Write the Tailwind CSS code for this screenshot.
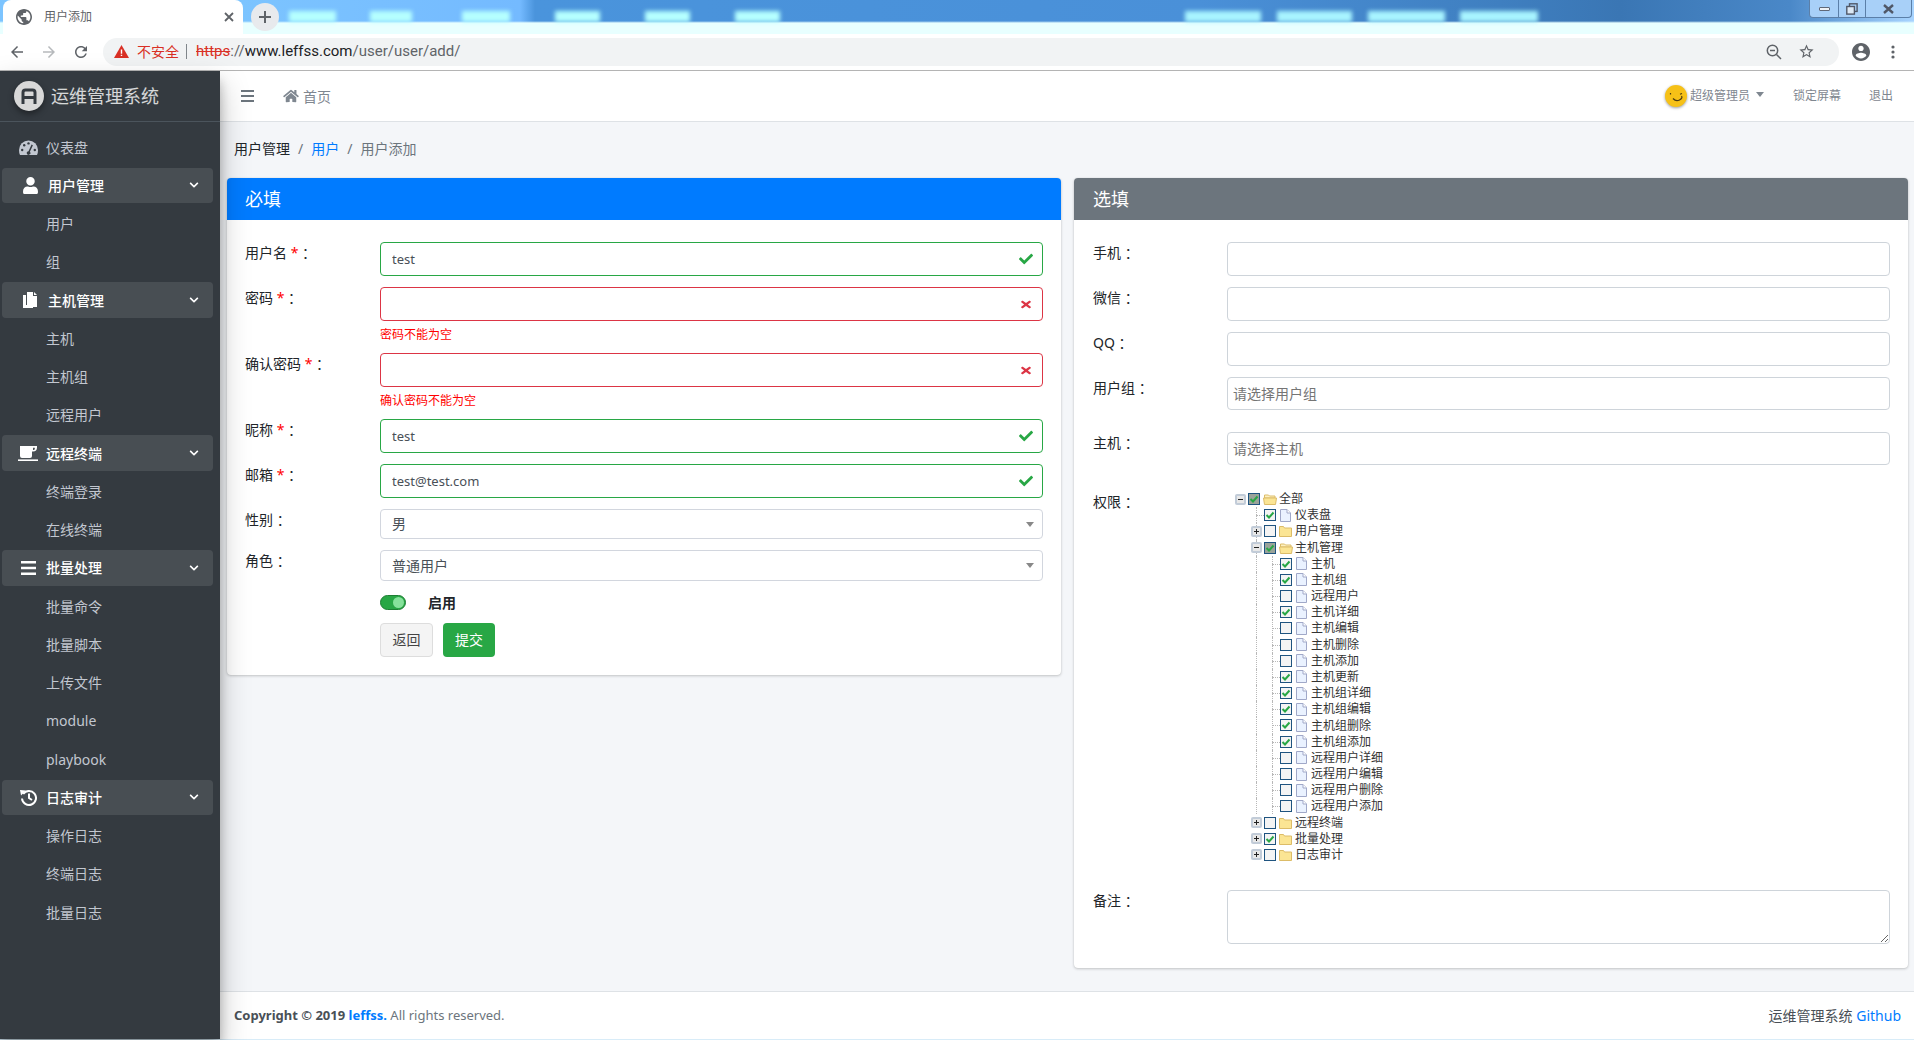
<!DOCTYPE html>
<html lang="zh-CN">
<head>
  <meta charset="UTF-8" />
  <title>用户添加</title>
  <script src="https://cdn.jsdelivr.net/npm/@tailwindcss/browser@4"></script>
</head>
<body class="w-[1914px] h-[1040px] overflow-hidden bg-[#d8ecf8] text-[14px] text-[#212529] font-['Noto_Sans','Noto_Sans_CJK_SC',sans-serif]">

  <!-- browser tab strip -->
  <div class="relative h-[34px] flex items-start bg-[linear-gradient(to_bottom,transparent_21px,#e8ffff_23px),linear-gradient(to_right,#7cc4ff_240px,#74baff_520px,#4a94dc_535px,#4a90d8_1200px,#3f7fc0_1500px,#3a76b4_1620px,#4a88c8_1790px,#a8d4ff_1914px)]">
    <div class="w-[240px] ml-[3px] h-[34px] bg-white rounded-t-lg flex items-center pl-[13px] pr-[9px] shrink-0">
      <svg class="w-[16px] h-[16px] mr-[12px]" viewBox="2 2 20 20" fill="#5f6368"><path d="M12 2C6.48 2 2 6.48 2 12s4.48 10 10 10 10-4.48 10-10S17.52 2 12 2zm-1 17.93c-3.95-.49-7-3.85-7-7.93 0-.62.08-1.21.21-1.79L9 15v1c0 1.1.9 2 2 2v1.93zm6.9-2.54c-.26-.81-1-1.39-1.9-1.39h-1v-3c0-.55-.45-1-1-1H8v-2h2c.55 0 1-.45 1-1V7h2c1.1 0 2-.9 2-2v-.41c2.93 1.19 5 4.06 5 7.41 0 2.08-.8 3.97-2.1 5.39z"/></svg>
      <span class="text-[12px] text-[#5f6368] flex-1">用户添加</span>
      <svg class="w-[10px] h-[10px]" viewBox="0 0 10 10" stroke="#5f6368" stroke-width="1.8"><path d="M1 1l8 8M9 1l-8 8"/></svg>
    </div>
    <div class="w-[28px] h-[28px] mt-[3px] ml-[8px] rounded-full bg-[#e8eaed] flex items-center justify-center shrink-0">
      <svg class="w-[12px] h-[12px]" viewBox="0 0 12 12" stroke="#5f6368" stroke-width="2"><path d="M6 0v12M0 6h12"/></svg>
    </div>
    <div class="h-[11px] w-[47px] mt-[11px] ml-[10px] bg-[#b5ffff] blur-[2px]"></div>
    <div class="h-[11px] w-[42px] mt-[11px] ml-[34px] bg-[#b5ffff] blur-[2px]"></div>
    <div class="h-[11px] w-[48px] mt-[11px] ml-[50px] bg-[#b5ffff] blur-[2px]"></div>
    <div class="h-[11px] w-[45px] mt-[11px] ml-[45px] bg-[#b5ffff] blur-[2px]"></div>
    <div class="h-[11px] w-[45px] mt-[11px] ml-[45px] bg-[#b5ffff] blur-[2px]"></div>
    <div class="h-[11px] w-[45px] mt-[11px] ml-[45px] bg-[#b5ffff] blur-[2px]"></div>
    <div class="h-[11px] w-[76px] mt-[11px] ml-[405px] bg-[#a8f4ff] blur-[2px]"></div>
    <div class="h-[11px] w-[75px] mt-[11px] ml-[16px] bg-[#a8f4ff] blur-[2px]"></div>
    <div class="h-[11px] w-[77px] mt-[11px] ml-[16px] bg-[#a8f4ff] blur-[2px]"></div>
    <div class="h-[11px] w-[78px] mt-[11px] ml-[15px] bg-[#a8f4ff] blur-[2px]"></div>
    <!-- window controls -->
    <div class="absolute top-0 right-[2px] w-[103px] h-[18px] flex bg-[#a8d0f8] border border-t-0 border-[#5b7fa8] rounded-b-[4px]">
      <div class="w-[29px] flex items-center justify-center border-r border-[#5b7fa8]"><span class="w-[11px] h-[4px] bg-[#eef2f6] border border-[#606878] rounded-[1px]"></span></div>
      <div class="w-[27px] flex items-center justify-center border-r border-[#5b7fa8]">
        <svg class="w-[12px] h-[12px]" viewBox="0 0 12 12" fill="none" stroke="#505868" stroke-width="1.4"><rect x="3.5" y=".8" width="7.6" height="7.6"/><rect x=".8" y="3.5" width="7.6" height="7.6" fill="#dce8f4"/></svg>
      </div>
      <div class="flex-1 flex items-center justify-center">
        <svg class="w-[11px] h-[10px]" viewBox="0 0 11 10" stroke="#505868" stroke-width="2.4"><path d="M1 1l9 8M10 1l-9 8"/></svg>
      </div>
    </div>
  </div>

  <!-- browser toolbar -->
  <div class="h-[37px] bg-white border-b border-[#b4b4b4] flex items-center pb-[1px]">
    <div class="w-[103px] flex items-center pl-[8px] gap-[14px] shrink-0">
      <svg class="w-[18px] h-[18px]" viewBox="0 0 24 24" fill="#5f6368"><path d="M20 11H7.83l5.59-5.59L12 4l-8 8 8 8 1.41-1.41L7.83 13H20v-2z"/></svg>
      <svg class="w-[18px] h-[18px]" viewBox="0 0 24 24" fill="#b6b9bc"><path d="M12 4l-1.41 1.41L16.17 11H4v2h12.17l-5.58 5.59L12 20l8-8z"/></svg>
      <svg class="w-[18px] h-[18px]" viewBox="0 0 24 24" fill="#5f6368"><path d="M17.65 6.35C16.2 4.9 14.21 4 12 4c-4.42 0-7.99 3.58-7.99 8s3.57 8 7.99 8c3.73 0 6.84-2.55 7.73-6h-2.08c-.82 2.33-3.04 4-5.65 4-3.31 0-6-2.69-6-6s2.69-6 6-6c1.66 0 3.14.69 4.22 1.78L13 11h7V4l-2.35 2.35z"/></svg>
    </div>
    <div class="w-[1736px] h-[28px] rounded-full bg-[#f1f3f4] flex items-center pl-[11px] pr-[24px]">
      <svg class="w-[15px] h-[13px] mr-[8px]" viewBox="0 0 15 13"><path d="M7.5 0L15 13H0z" fill="#d93025"/><path d="M6.8 4.5h1.4v4.2H6.8zM6.8 9.7h1.4v1.4H6.8z" fill="#fff"/></svg>
      <span class="text-[14px] text-[#d93025]">不安全</span>
      <span class="w-px h-[15px] bg-[#80868b] ml-[7px] mr-[9px]"></span>
      <span class="text-[15px] font-['Roboto','Noto_Sans',sans-serif] flex-1"><span class="text-[#d93025] line-through">https</span><span class="text-[#5f6368]">://</span><span class="text-[#202124]">www.leffss.com</span><span class="text-[#5f6368]">/user/user/add/</span></span>
      <svg class="w-[16px] h-[16px] mr-[16px]" viewBox="0 0 16 16" fill="none" stroke="#5f6368" stroke-width="1.5"><circle cx="6.5" cy="6.5" r="5.2"/><path d="M10.5 10.5L15 15M4 6.5h5"/></svg>
      <svg class="w-[17px] h-[17px]" viewBox="0 0 24 24" fill="#5f6368"><path d="M22 9.24l-7.19-.62L12 2 9.19 8.63 2 9.24l5.46 4.73L5.82 21 12 17.27 18.18 21l-1.63-7.03L22 9.24zM12 15.4l-3.76 2.27 1-4.28-3.32-2.88 4.38-.38L12 6.1l1.71 4.04 4.38.38-3.32 2.88 1 4.28L12 15.4z"/></svg>
    </div>
    <svg class="w-[18px] h-[18px] ml-[13px]" viewBox="2 2 20 20" fill="#5f6368"><path d="M12 2C6.48 2 2 6.48 2 12s4.48 10 10 10 10-4.48 10-10S17.52 2 12 2zm0 3c1.66 0 3 1.34 3 3s-1.34 3-3 3-3-1.34-3-3 1.34-3 3-3zm0 14.2c-2.5 0-4.71-1.28-6-3.22.03-1.99 4-3.08 6-3.08 1.99 0 5.97 1.09 6 3.08-1.29 1.94-3.5 3.22-6 3.22z"/></svg>
    <svg class="w-[4px] h-[14px] ml-[21px]" viewBox="0 0 4 14" fill="#5f6368"><circle cx="2" cy="2" r="1.6"/><circle cx="2" cy="7" r="1.6"/><circle cx="2" cy="12" r="1.6"/></svg>
  </div>

  <div class="h-[968px] flex">
    <!-- sidebar -->
    <aside class="relative z-10 w-[220px] shrink-0 bg-[#343a40] text-[#c2c7d0] shadow-[0_14px_28px_rgba(0,0,0,.25),0_10px_10px_rgba(0,0,0,.22)]">
      <div class="h-[51px] border-b border-[#4b545c] flex items-center pl-[14px]">
        <div class="w-[30px] h-[30px] rounded-full bg-[#d8d8d8] shadow-[0_3px_6px_rgba(0,0,0,.4)] flex items-center justify-center mr-[7px]">
          <svg class="w-[16px] h-[16px]" viewBox="0 0 16 16" fill="none" stroke="#343a40" stroke-width="3"><path d="M2 16V4.5Q2 2 4.5 2h7Q14 2 14 4.5V16M2 9.5h12"/></svg>
        </div>
        <span class="text-[18px] text-white/80">运维管理系统</span>
      </div>
      <nav class="pt-[6px]">
        <a class="h-[38.25px] flex items-center pl-[19px]">
          <svg class="w-[19px] h-[15px] mr-[8px]" viewBox="0 0 19 15"><path d="M1 15Q0 13 0 10a9.5 9.5 0 0 1 19 0q0 3-1 5z" fill="#c2c7d0"/><g fill="#343a40"><circle cx="3.2" cy="10" r="1.2"/><circle cx="5.2" cy="5.3" r="1.2"/><circle cx="9.5" cy="3.4" r="1.2"/><circle cx="15.8" cy="10" r="1.2"/><path d="M12.6 4.6l1.3.6-3 6.6a1.8 1.8 0 1 1-1.4-.6z"/></g></svg>
          <span>仪表盘</span>
        </a>

        <div class="h-[38.25px] flex items-center pl-[2px] pr-[7px]">
          <div class="w-full h-[35px] rounded-[4px] bg-white/10 text-white flex items-center pl-[21px] pr-[14px]">
            <svg class="w-[15px] h-[17px] mr-[10px]" viewBox="0 0 448 512" fill="#fff"><path d="M224 256c70.7 0 128-57.3 128-128S294.7 0 224 0 96 57.3 96 128s57.3 128 128 128zm89.6 32h-16.7c-22.2 10.2-46.9 16-72.9 16s-50.6-5.8-72.9-16h-16.7C60.2 288 0 348.2 0 422.4V464c0 26.5 21.5 48 48 48h352c26.5 0 48-21.5 48-48v-41.6c0-74.2-60.2-134.4-134.4-134.4z"/></svg>
            <span class="flex-1 font-medium">用户管理</span>
            <svg class="w-[10px] h-[10px]" viewBox="0 0 448 512" fill="#fff"><path d="M207.029 381.476L12.686 187.132c-9.373-9.373-9.373-24.569 0-33.941l22.667-22.667c9.357-9.357 24.522-9.375 33.901-.04L224 284.505l154.745-154.021c9.379-9.335 24.544-9.317 33.901.04l22.667 22.667c9.373 9.373 9.373 24.569 0 33.941L240.971 381.476c-9.373 9.372-24.569 9.372-33.942 0z"/></svg>
          </div>
        </div>
        <a class="h-[38.25px] flex items-center pl-[46px]">用户</a>
        <a class="h-[38.25px] flex items-center pl-[46px]">组</a>

        <div class="h-[38.25px] flex items-center pl-[2px] pr-[7px]">
          <div class="w-full h-[36px] rounded-[4px] bg-white/10 text-white flex items-center pl-[19px] pr-[14px]">
            <svg class="w-[15px] h-[16px] ml-[2px] mr-[10px]" viewBox="0 0 15 16" fill="#fff"><path d="M0 3h3v10h7v3H0z"/><path d="M4 0h6v4h4v11H4z"/><path d="M11 0l3 3h-3z"/></svg>
            <span class="flex-1 font-medium">主机管理</span>
            <svg class="w-[10px] h-[10px]" viewBox="0 0 448 512" fill="#fff"><path d="M207.029 381.476L12.686 187.132c-9.373-9.373-9.373-24.569 0-33.941l22.667-22.667c9.357-9.357 24.522-9.375 33.901-.04L224 284.505l154.745-154.021c9.379-9.335 24.544-9.317 33.901.04l22.667 22.667c9.373 9.373 9.373 24.569 0 33.941L240.971 381.476c-9.373 9.372-24.569 9.372-33.942 0z"/></svg>
          </div>
        </div>
        <a class="h-[38.25px] flex items-center pl-[46px]">主机</a>
        <a class="h-[38.25px] flex items-center pl-[46px]">主机组</a>
        <a class="h-[38.25px] flex items-center pl-[46px]">远程用户</a>

        <div class="h-[38.25px] flex items-center pl-[2px] pr-[7px]">
          <div class="w-full h-[36px] rounded-[4px] bg-white/10 text-white flex items-center pl-[16px] pr-[14px]">
            <svg class="w-[20px] h-[15px] mr-[8px]" viewBox="0 0 20 15" fill="#fff"><path d="M2 0h17v1.5a4 4 0 0 1-4 4h-1V10a2 2 0 0 1-2 2H4a2 2 0 0 1-2-2z"/><path d="M15 1.8h1.8v1.1a1.2 1.2 0 0 1-1.2 1.1H15z" fill="#4a4f54"/><path d="M0 13.4h20V15H0z"/></svg>
            <span class="flex-1 font-medium">远程终端</span>
            <svg class="w-[10px] h-[10px]" viewBox="0 0 448 512" fill="#fff"><path d="M207.029 381.476L12.686 187.132c-9.373-9.373-9.373-24.569 0-33.941l22.667-22.667c9.357-9.357 24.522-9.375 33.901-.04L224 284.505l154.745-154.021c9.379-9.335 24.544-9.317 33.901.04l22.667 22.667c9.373 9.373 9.373 24.569 0 33.941L240.971 381.476c-9.373 9.372-24.569 9.372-33.942 0z"/></svg>
          </div>
        </div>
        <a class="h-[38.25px] flex items-center pl-[46px]">终端登录</a>
        <a class="h-[38.25px] flex items-center pl-[46px]">在线终端</a>

        <div class="h-[38.25px] flex items-center pl-[2px] pr-[7px]">
          <div class="w-full h-[36px] rounded-[4px] bg-white/10 text-white flex items-center pl-[19px] pr-[14px]">
            <svg class="w-[15px] h-[14px] ml-[0px] mr-[10px]" viewBox="0 0 15 14" fill="#fff"><path d="M0 0h15v2.6H0zM0 5.7h15v2.6H0zM0 11.4h15V14H0z"/></svg>
            <span class="flex-1 font-medium">批量处理</span>
            <svg class="w-[10px] h-[10px]" viewBox="0 0 448 512" fill="#fff"><path d="M207.029 381.476L12.686 187.132c-9.373-9.373-9.373-24.569 0-33.941l22.667-22.667c9.357-9.357 24.522-9.375 33.901-.04L224 284.505l154.745-154.021c9.379-9.335 24.544-9.317 33.901.04l22.667 22.667c9.373 9.373 9.373 24.569 0 33.941L240.971 381.476c-9.373 9.372-24.569 9.372-33.942 0z"/></svg>
          </div>
        </div>
        <a class="h-[38.25px] flex items-center pl-[46px]">批量命令</a>
        <a class="h-[38.25px] flex items-center pl-[46px]">批量脚本</a>
        <a class="h-[38.25px] flex items-center pl-[46px]">上传文件</a>
        <a class="h-[38.25px] flex items-center pl-[46px]">module</a>
        <a class="h-[38.25px] flex items-center pl-[46px]">playbook</a>

        <div class="h-[38.25px] flex items-center pl-[2px] pr-[7px]">
          <div class="w-full h-[35px] rounded-[4px] bg-white/10 text-white flex items-center pl-[18px] pr-[14px]">
            <svg class="w-[17px] h-[17px] mr-[9px]" viewBox="0 0 17 17" fill="none" stroke="#fff" stroke-width="2"><path d="M3.2 5A7 7 0 1 1 2 9.5"/><path d="M9 4.5V9l3 2"/><path d="M0 1l6 .4L1 6.5z" fill="#fff" stroke="none"/></svg>
            <span class="flex-1 font-medium">日志审计</span>
            <svg class="w-[10px] h-[10px]" viewBox="0 0 448 512" fill="#fff"><path d="M207.029 381.476L12.686 187.132c-9.373-9.373-9.373-24.569 0-33.941l22.667-22.667c9.357-9.357 24.522-9.375 33.901-.04L224 284.505l154.745-154.021c9.379-9.335 24.544-9.317 33.901.04l22.667 22.667c9.373 9.373 9.373 24.569 0 33.941L240.971 381.476c-9.373 9.372-24.569 9.372-33.942 0z"/></svg>
          </div>
        </div>
        <a class="h-[38.25px] flex items-center pl-[46px]">操作日志</a>
        <a class="h-[38.25px] flex items-center pl-[46px]">终端日志</a>
        <a class="h-[38.25px] flex items-center pl-[46px]">批量日志</a>
      </nav>
    </aside>

    <div class="flex-1 flex flex-col min-w-0">
      <!-- top navbar -->
      <header class="h-[51px] bg-white border-b border-[#dee2e6] flex items-center pl-[21px] pr-[21px] text-[#7f8790]">
        <svg class="w-[13px] h-[12px] mr-[29px]" viewBox="0 0 13 12" fill="#6c757d"><path d="M0 0h13v2H0zM0 5h13v2H0zM0 10h13v2H0z"/></svg>
        <svg class="w-[16px] h-[14px] mr-[4px]" viewBox="0 0 576 512" fill="#7f8790"><path d="M280.37 148.26L96 300.11V464a16 16 0 0 0 16 16l112.06-.29a16 16 0 0 0 15.92-16V368a16 16 0 0 1 16-16h64a16 16 0 0 1 16 16v95.64a16 16 0 0 0 16 16.05L464 480a16 16 0 0 0 16-16V300L295.67 148.26a12.19 12.19 0 0 0-15.3 0zM571.6 251.47L488 182.56V44.05a12 12 0 0 0-12-12h-56a12 12 0 0 0-12 12v72.61L318.47 43a48 48 0 0 0-61 0L4.34 251.47a12 12 0 0 0-1.6 16.9l25.5 31A12 12 0 0 0 45.15 301l235.22-193.74a12.19 12.19 0 0 1 15.3 0L530.9 301a12 12 0 0 0 16.9-1.6l25.5-31a12 12 0 0 0-1.7-16.93z"/></svg>
        <span class="text-[14px] flex-1">首页</span>
        <div class="w-[22px] h-[22px] rounded-full bg-[#f6c117] shadow-[0_1px_3px_rgba(0,0,0,.4)] mr-[3px]">
          <svg class="w-[22px] h-[22px]" viewBox="0 0 22 22" fill="none" stroke="#4a3a10" stroke-width="1.2"><path d="M5.5 8v1.4M17 8.5l-2 .7M8 13.5q3 3.5 6.5 1.5t2-4"/></svg>
        </div>
        <span class="text-[12px]">超级管理员</span>
        <span class="w-0 h-0 border-x-[4.5px] border-x-transparent border-t-[5px] border-t-[#7f8790] ml-[6px] mb-[3px] mr-[29px]"></span>
        <span class="text-[12px] mr-[28px]">锁定屏幕</span>
        <span class="text-[12px]">退出</span>
      </header>

      <main class="flex-1 bg-[#f4f6f9] pl-[7px] pr-[6px] min-h-0">
        <div class="h-[56px] pl-[7px] pb-[4px] flex items-center">
          <span>用户管理</span><span class="text-[#6c757d] mx-[8px]">/</span><a class="text-[#007bff]">用户</a><span class="text-[#6c757d] mx-[8px]">/</span><span class="text-[#6c757d]">用户添加</span>
        </div>

        <div class="grid grid-cols-2 gap-[13px] items-start">
          <!-- required -->
          <section class="bg-white rounded-[4px] shadow-[0_0_1px_rgba(0,0,0,.125),0_1px_3px_rgba(0,0,0,.2)]">
            <h3 class="h-[42px] bg-[#007bff] rounded-t-[4px] px-[18px] flex items-center text-[18px] text-white">必填</h3>
            <div class="px-[18px] pt-[22px] pb-[18px] grid grid-cols-[135px_1fr] leading-5">
              <label>用户名 <span class="text-[#ff0000]">*</span> <span class="font-['Noto_Sans_CJK_TC']">：</span></label>
              <div class="relative mb-[11px]">
                <input value="test" class="w-full h-[34px] border border-[#28a745] rounded-[4px] pl-[11px] pr-[36px] text-[13px] text-[#495057] outline-none" />
                <svg class="absolute right-[10px] top-[10px] w-[14px] h-[14px]" viewBox="0 0 512 512" fill="#28a745"><path d="M173.898 439.404l-166.4-166.4c-9.997-9.997-9.997-26.206 0-36.204l36.203-36.204c9.997-9.998 26.207-9.998 36.204 0L192 312.69 432.095 72.596c9.997-9.997 26.207-9.997 36.204 0l36.203 36.204c9.997 9.997 9.997 26.206 0 36.204l-294.4 294.401c-9.998 9.997-26.207 9.997-36.204-.001z"/></svg>
              </div>
              <label>密码 <span class="text-[#ff0000]">*</span> <span class="font-['Noto_Sans_CJK_TC']">：</span></label>
              <div class="mb-[11px]">
                <div class="relative">
                  <input class="w-full h-[34px] border border-[#dc3545] rounded-[4px] pl-[11px] pr-[36px] outline-none" />
                  <svg class="absolute right-[12px] top-[12px] w-[10px] h-[11px]" viewBox="0 0 352 512" preserveAspectRatio="none" fill="#dc3545"><path d="M242.72 256l100.07-100.07c12.28-12.28 12.28-32.19 0-44.48l-22.24-22.24c-12.28-12.28-32.19-12.28-44.48 0L176 189.28 75.93 89.21c-12.28-12.28-32.19-12.28-44.48 0L9.21 111.45c-12.28 12.28-12.28 32.19 0 44.48L109.28 256 9.21 356.07c-12.28 12.28-12.28 32.19 0 44.48l22.24 22.24c12.28 12.28 32.2 12.28 44.48 0L176 322.72l100.07 100.07c12.28 12.28 32.2 12.28 44.48 0l22.24-22.24c12.28-12.28 12.28-32.19 0-44.48L242.72 256z"/></svg>
                </div>
                <p class="h-[21px] pt-[7px] text-[12px] leading-[14px] text-[#ff0000]">密码不能为空</p>
              </div>
              <label>确认密码 <span class="text-[#ff0000]">*</span> <span class="font-['Noto_Sans_CJK_TC']">：</span></label>
              <div class="mb-[11px]">
                <div class="relative">
                  <input class="w-full h-[34px] border border-[#dc3545] rounded-[4px] pl-[11px] pr-[36px] outline-none" />
                  <svg class="absolute right-[12px] top-[12px] w-[10px] h-[11px]" viewBox="0 0 352 512" preserveAspectRatio="none" fill="#dc3545"><path d="M242.72 256l100.07-100.07c12.28-12.28 12.28-32.19 0-44.48l-22.24-22.24c-12.28-12.28-32.19-12.28-44.48 0L176 189.28 75.93 89.21c-12.28-12.28-32.19-12.28-44.48 0L9.21 111.45c-12.28 12.28-12.28 32.19 0 44.48L109.28 256 9.21 356.07c-12.28 12.28-12.28 32.19 0 44.48l22.24 22.24c12.28 12.28 32.2 12.28 44.48 0L176 322.72l100.07 100.07c12.28 12.28 32.2 12.28 44.48 0l22.24-22.24c12.28-12.28 12.28-32.19 0-44.48L242.72 256z"/></svg>
                </div>
                <p class="h-[21px] pt-[7px] text-[12px] leading-[14px] text-[#ff0000]">确认密码不能为空</p>
              </div>
              <label>昵称 <span class="text-[#ff0000]">*</span> <span class="font-['Noto_Sans_CJK_TC']">：</span></label>
              <div class="relative mb-[11px]">
                <input value="test" class="w-full h-[34px] border border-[#28a745] rounded-[4px] pl-[11px] pr-[36px] text-[13px] text-[#495057] outline-none" />
                <svg class="absolute right-[10px] top-[10px] w-[14px] h-[14px]" viewBox="0 0 512 512" fill="#28a745"><path d="M173.898 439.404l-166.4-166.4c-9.997-9.997-9.997-26.206 0-36.204l36.203-36.204c9.997-9.998 26.207-9.998 36.204 0L192 312.69 432.095 72.596c9.997-9.997 26.207-9.997 36.204 0l36.203 36.204c9.997 9.997 9.997 26.206 0 36.204l-294.4 294.401c-9.998 9.997-26.207 9.997-36.204-.001z"/></svg>
              </div>
              <label>邮箱 <span class="text-[#ff0000]">*</span> <span class="font-['Noto_Sans_CJK_TC']">：</span></label>
              <div class="relative mb-[11px]">
                <input value="test@test.com" class="w-full h-[34px] border border-[#28a745] rounded-[4px] pl-[11px] pr-[36px] text-[13px] text-[#495057] outline-none" />
                <svg class="absolute right-[10px] top-[10px] w-[14px] h-[14px]" viewBox="0 0 512 512" fill="#28a745"><path d="M173.898 439.404l-166.4-166.4c-9.997-9.997-9.997-26.206 0-36.204l36.203-36.204c9.997-9.998 26.207-9.998 36.204 0L192 312.69 432.095 72.596c9.997-9.997 26.207-9.997 36.204 0l36.203 36.204c9.997 9.997 9.997 26.206 0 36.204l-294.4 294.401c-9.998 9.997-26.207 9.997-36.204-.001z"/></svg>
              </div>
              <label>性别 <span class="font-['Noto_Sans_CJK_TC']">：</span></label>
              <div class="h-[30px] mb-[11px] border border-[#d2d6de] rounded-[4px] pl-[11px] pr-[8px] flex items-center justify-between text-[#495057]">
                <span>男</span><span class="w-0 h-0 border-x-[4px] border-x-transparent border-t-[5px] border-t-[#888]"></span>
              </div>
              <label>角色 <span class="font-['Noto_Sans_CJK_TC']">：</span></label>
              <div class="h-[31px] mb-[14px] border border-[#d2d6de] rounded-[4px] pl-[11px] pr-[8px] flex items-center justify-between text-[#495057]">
                <span>普通用户</span><span class="w-0 h-0 border-x-[4px] border-x-transparent border-t-[5px] border-t-[#888]"></span>
              </div>
              <div></div>
              <div class="flex items-center h-[15px] mb-[13px]">
                <span class="w-[26px] h-[15px] rounded-full bg-[#28a745] border border-[#1e7e34] flex items-center justify-end pr-[1px] mr-[22px]"><span class="w-[11px] h-[11px] rounded-full bg-[#86e29b]"></span></span>
                <b class="font-bold">启用</b>
              </div>
              <div></div>
              <div class="flex gap-[10px]">
                <button class="h-[34px] w-[53px] bg-[#f4f4f4] border border-[#ddd] rounded-[4px] text-[#444]">返回</button>
                <button class="h-[34px] w-[52px] bg-[#28a745] rounded-[4px] text-white">提交</button>
              </div>
            </div>
          </section>

          <!-- optional -->
          <section class="bg-white rounded-[4px] shadow-[0_0_1px_rgba(0,0,0,.125),0_1px_3px_rgba(0,0,0,.2)]">
            <h3 class="h-[42px] bg-[#6c757d] rounded-t-[4px] px-[19px] flex items-center text-[18px] text-white">选填</h3>
            <div class="px-[18px] pt-[22px] pb-[24px] grid grid-cols-[135px_1fr] leading-5">
              <label class="pl-px">手机 <span class="font-['Noto_Sans_CJK_TC']">：</span></label>
              <input class="h-[34px] mb-[11px] border border-[#ced4da] rounded-[4px] outline-none" />
              <label class="pl-px">微信 <span class="font-['Noto_Sans_CJK_TC']">：</span></label>
              <input class="h-[34px] mb-[11px] border border-[#ced4da] rounded-[4px] outline-none" />
              <label class="pl-px">QQ <span class="font-['Noto_Sans_CJK_TC']">：</span></label>
              <input class="h-[34px] mb-[11px] border border-[#ced4da] rounded-[4px] outline-none" />
              <label class="pl-px">用户组 <span class="font-['Noto_Sans_CJK_TC']">：</span></label>
              <input placeholder="请选择用户组" class="h-[33px] mb-[22px] border border-[#ced4da] rounded-[4px] pl-[5px] outline-none placeholder:text-[#757575]" />
              <label class="pl-px">主机 <span class="font-['Noto_Sans_CJK_TC']">：</span></label>
              <input placeholder="请选择主机" class="h-[33px] mb-[26px] border border-[#ced4da] rounded-[4px] pl-[5px] outline-none placeholder:text-[#757575]" />
              <label class="pl-px">权限 <span class="font-['Noto_Sans_CJK_TC']">：</span></label>
              <div id="tree" class="pl-[5px] mb-[27px] text-[12px] text-[#333]"></div>
              <label class="pl-px">备注 <span class="font-['Noto_Sans_CJK_TC']">：</span></label>
              <textarea class="h-[54px] border border-[#ced4da] rounded-[4px] outline-none block w-full"></textarea>
            </div>
          </section>
        </div>
      </main>

      <footer class="h-[48px] bg-white border-t border-[#dee2e6] pl-[14px] pr-[13px] flex items-center justify-between text-[#6c757d]">
        <span class="text-[13px] font-['Noto_Sans',sans-serif]"><b class="font-bold text-[#495057]">Copyright © 2019 <a class="text-[#007bff]">leffss.</a></b> All rights reserved.</span>
        <span class="text-[#495057]">运维管理系统 <a class="text-[#007bff]">Github</a></span>
      </footer>
    </div>
  </div>

  <script>
    // level, name, type (open / closed / file), state (0 none, 1 checked, 2 partial)
    const nodes = [
      [0, '全部', 'open', 2], [1, '仪表盘', 'file', 1], [1, '用户管理', 'closed', 0], [1, '主机管理', 'open', 2],
      [2, '主机', 'file', 1], [2, '主机组', 'file', 1], [2, '远程用户', 'file', 0], [2, '主机详细', 'file', 1],
      [2, '主机编辑', 'file', 0], [2, '主机删除', 'file', 0], [2, '主机添加', 'file', 0], [2, '主机更新', 'file', 1],
      [2, '主机组详细', 'file', 1], [2, '主机组编辑', 'file', 1], [2, '主机组删除', 'file', 1], [2, '主机组添加', 'file', 1],
      [2, '远程用户详细', 'file', 0], [2, '远程用户编辑', 'file', 0], [2, '远程用户删除', 'file', 0], [2, '远程用户添加', 'file', 0],
      [1, '远程终端', 'closed', 0], [1, '批量处理', 'closed', 1], [1, '日志审计', 'closed', 0],
    ];
    const indents = ['ml-0', 'ml-[16px]', 'ml-[32px]'];
    const vline = 'absolute top-0 h-full border-l border-dotted border-[#b8b8b8]';
    const tick = 'absolute top-1/2 w-[8px] border-t border-dotted border-[#b8b8b8]';

    function expander(type) {
      const bar = type === 'open' ? '' : '<path d="M5.5 3v5" stroke="#222"/>';
      return `<svg class="w-[11px] h-[11px]" viewBox="0 0 11 11"><rect width="11" height="11" rx="2" fill="#c2ccd8"/><rect x="2" y="2" width="7" height="7" fill="#e8e8e8"/><path d="M3 5.5h5" stroke="#222"/>${bar}</svg>`;
    }
    function checkbox(state) {
      const bg = state === 2 ? 'bg-[#9aa39a]' : 'bg-[#f4f4f4]';
      const mark = state ? '<svg class="w-[10px] h-[10px]" viewBox="0 0 10 10" fill="none" stroke="#28a745" stroke-width="2"><path d="M1.5 5l2.5 2.5 4.5-5"/></svg>' : '';
      return `<span class="w-[12px] h-[12px] shrink-0 border border-[#1f5480] ${bg} flex items-center justify-center">${mark}</span>`;
    }
    function nodeIcon(type) {
      if (type === 'file') return '<svg class="w-[11px] h-[13px]" viewBox="0 0 11 13"><path d="M.5.5h6.5l3.5 3.5v8.5H.5z" fill="#eaf2ff" stroke="#a0a8c8"/><path d="M7 .5V4h3.5" fill="#fff" stroke="#a0a8c8"/></svg>';
      if (type === 'closed') return '<svg class="w-[13px] h-[12px]" viewBox="0 0 13 12"><path d="M.5 1.5h4l1 1.5h7v8.5H.5z" fill="#fbe594" stroke="#dcbc68"/></svg>';
      return '<svg class="w-[14px] h-[12px]" viewBox="0 0 14 12"><path d="M1.5 2h4l1 1h5.5v2H1.5z" fill="#fdf0c0" stroke="#dcbc68"/><path d="M.5 5h11l2 0-1 6.5H1.5z" fill="#fbe594" stroke="#dcbc68"/></svg>';
    }

    document.getElementById('tree').innerHTML = nodes.map(([level, name, type, state], i) => {
      let guides = '';
      if (i > 0 && i < 20) guides += `<span class="${vline} left-[24px]"></span>`;
      if (level === 2) guides += `<span class="${vline} left-[40px] ${i === 19 ? 'h-1/2' : ''}"></span><span class="${tick} left-[40px]"></span>`;
      if (type === 'file' && level === 1) guides += `<span class="${tick} left-[24px]"></span>`;
      const exp = type === 'file' ? '' : expander(type);
      return `<div class="relative h-[16.18px] flex items-center">${guides}
        <span class="relative w-[16px] h-full flex items-center justify-center shrink-0 ${indents[level]}">${exp}</span>
        <span class="relative">${checkbox(state)}</span>
        <span class="relative w-[19px] flex justify-center shrink-0">${nodeIcon(type)}</span>
        <span class="relative whitespace-nowrap">${name}</span></div>`;
    }).join('');
  </script>
</body>
</html>
